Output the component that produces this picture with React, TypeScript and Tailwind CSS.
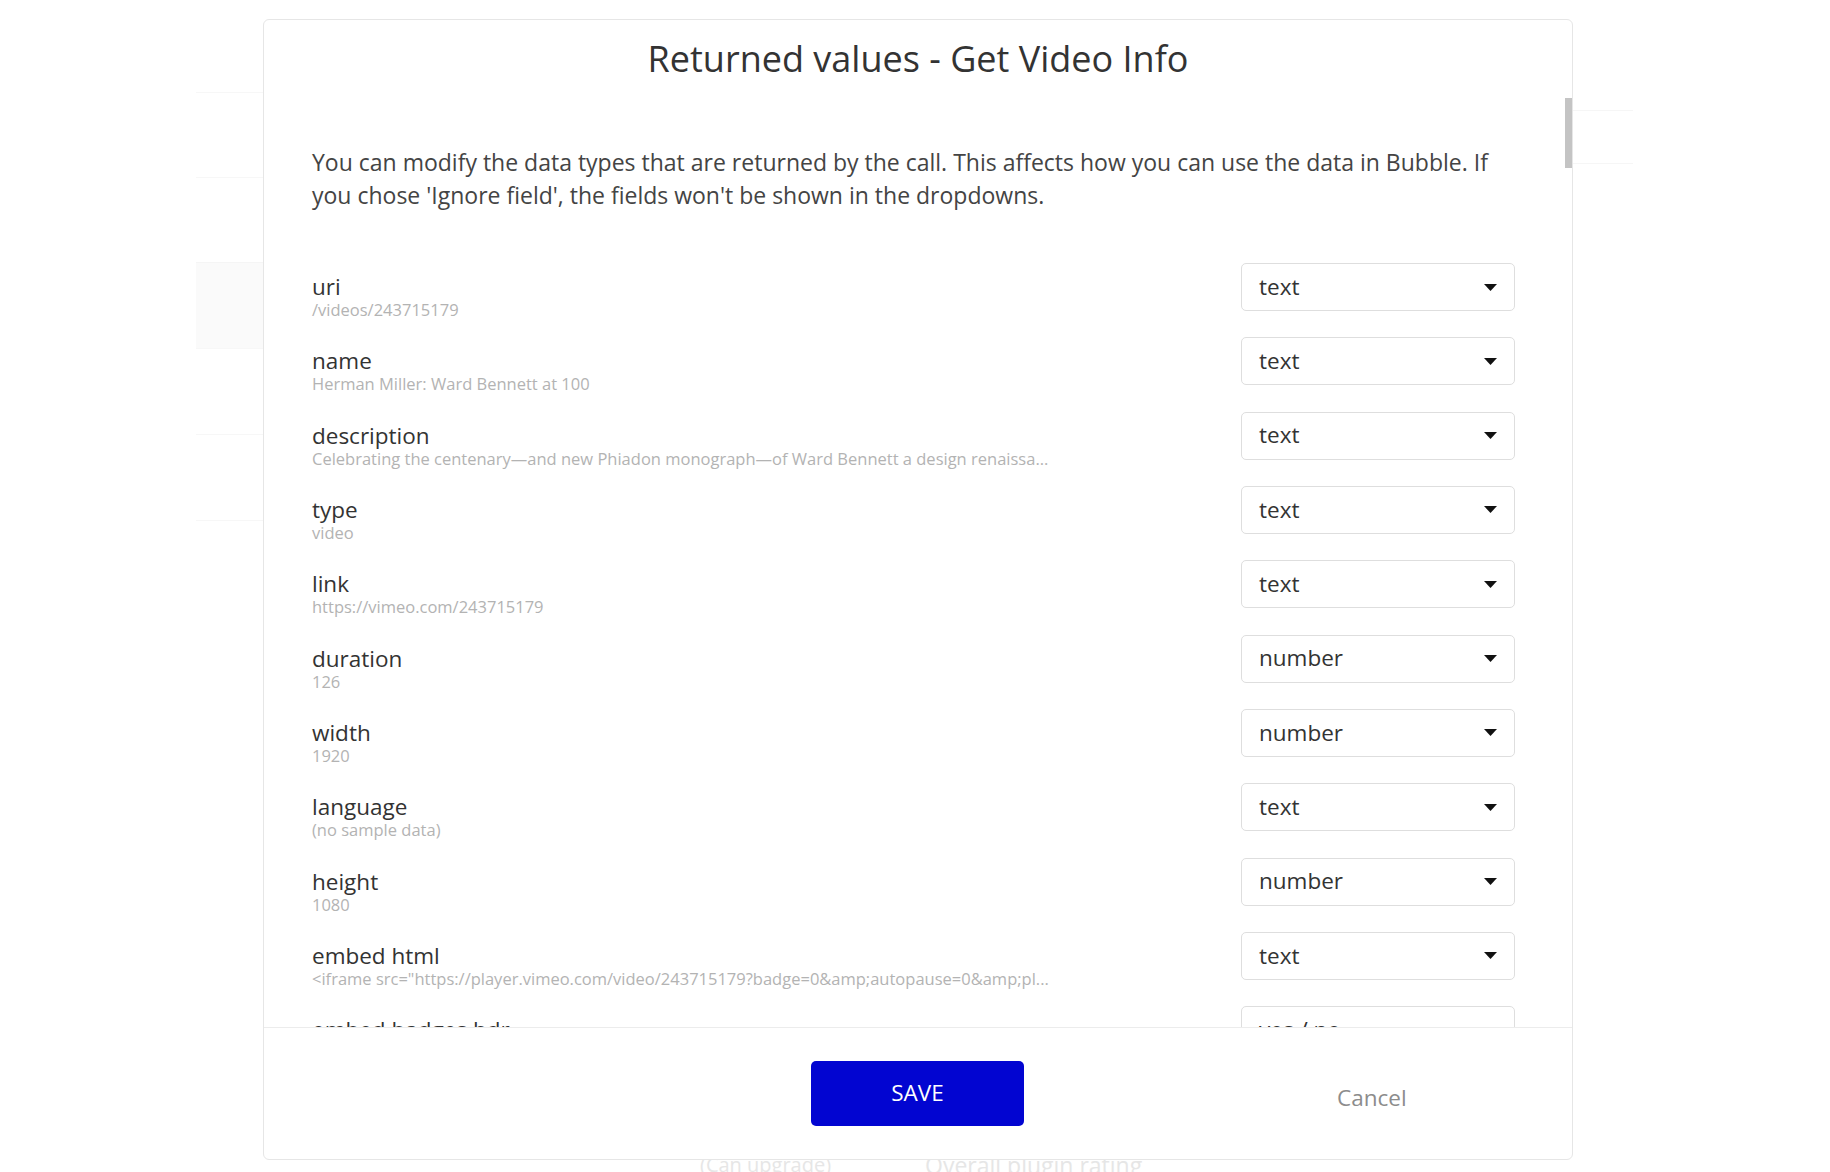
import React from "react";

const fields = [
  { name: "uri", sample: "/videos/243715179", type: "text" },
  { name: "name", sample: "Herman Miller: Ward Bennett at 100", type: "text" },
  { name: "description", sample: "Celebrating the centenary\u2014and new Phiadon monograph\u2014of Ward Bennett a design renaissa...", type: "text" },
  { name: "type", sample: "video", type: "text" },
  { name: "link", sample: "https://vimeo.com/243715179", type: "text" },
  { name: "duration", sample: "126", type: "number" },
  { name: "width", sample: "1920", type: "number" },
  { name: "language", sample: "(no sample data)", type: "text" },
  { name: "height", sample: "1080", type: "number" },
  { name: "embed html", sample: '<iframe src="https://player.vimeo.com/video/243715179?badge=0&amp;autopause=0&amp;pl...', type: "text" },
  { name: "embed badges hdr", sample: "false", type: "yes / no" },
  { name: "embed badges live showcase", sample: "false", type: "yes / no" },
];

function Caret() {
  return (
    <svg width="13" height="7" viewBox="0 0 13 7" className="shrink-0">
      <path d="M0 0h13L6.5 7z" fill="#111" />
    </svg>
  );
}

function TypeSelect({ value }: { value: string }) {
  return (
    <div className="w-[274px] h-[48px] shrink-0 flex items-center justify-between pl-[17px] pr-[17px] bg-white border border-[#dedede] rounded-[5px]">
      <span className="text-[22.5px] leading-none text-[#333]">{value}</span>
      <Caret />
    </div>
  );
}

export default function App() {
  return (
    <div className="relative w-[1830px] h-[1172px] overflow-hidden bg-white font-['Open_Sans',sans-serif]">
      {/* faint page behind the popup */}
      <div className="absolute inset-0">
        <div className="absolute left-[196px] top-[92px] w-[67px] flex flex-col">
          <div className="h-[85px] border-t border-[#f7f7f7]" />
          <div className="h-[85px] border-t border-[#f7f7f7]" />
          <div className="h-[86px] border-t border-[#f5f5f5] bg-[#fafafa]" />
          <div className="h-[86px] border-t border-[#f7f7f7]" />
          <div className="h-[86px] border-t border-[#f7f7f7]" />
          <div className="border-t border-[#f7f7f7]" />
        </div>
        <div className="absolute left-[1573px] top-[110px] w-[60px] h-[54px] border-y border-[#f6f6f6]" />
        <div className="absolute left-[700px] top-[1150px] text-[20px] text-[#e6e6e6]">(Can upgrade)</div>
        <div className="absolute left-[925px] top-[1148px] text-[23px] text-[#e6e6e6]">Overall plugin rating</div>
      </div>

      <div className="relative ml-[263px] mt-[19px] w-[1310px] h-[1141px] flex flex-col bg-white border border-[#e6e6e6] rounded-[6px] overflow-hidden">
        <div className="h-[78px] shrink-0 pt-[16px] text-center">
          <h1 className="text-[36px] leading-[45px] text-[#333]">Returned values - Get Video Info</h1>
        </div>

        <div className="relative flex-1 overflow-hidden">
          <div className="pl-[48px] pr-[57px] pt-[48px]">
            <p className="text-[23px] leading-[33px] text-[#444]">
              You can modify the data types that are returned by the call. This affects how you can use the data in Bubble. If you chose 'Ignore field', the fields won't be shown in the dropdowns.
            </p>
            <div className="mt-[51px] flex flex-col gap-[18.33px]">
              {fields.map((f) => (
                <div key={f.name} className="flex items-start justify-between">
                  <div className="pt-[10px] min-w-0">
                    <div className="text-[22.5px] leading-[28px] text-[#333]">{f.name}</div>
                    <div className="text-[16.5px] leading-[18px] text-[#b3b3b3] whitespace-nowrap">{f.sample}</div>
                  </div>
                  <TypeSelect value={f.type} />
                </div>
              ))}
            </div>
          </div>
          <div className="absolute right-0 top-0 w-[7px] h-[70px] bg-[#c4c4c4]" />
        </div>

        <div className="h-[132px] shrink-0 border-t border-[#ececec] flex items-center pl-[547px]">
          <button className="w-[213px] h-[65px] rounded-[5px] bg-[#0205d1] text-white text-[22.5px] leading-none">
            SAVE
          </button>
          <button className="ml-[313px] mt-[9px] text-[22.5px] leading-none text-[#8c8c8c]">Cancel</button>
        </div>
      </div>
    </div>
  );
}
